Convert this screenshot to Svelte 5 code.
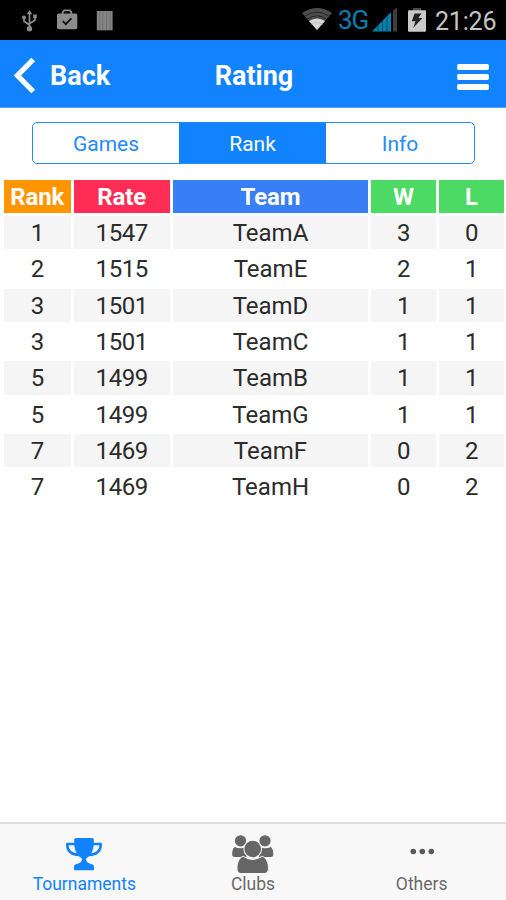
<script>
  const columns = [
    { label: 'Rank', color: '#ff9500' },
    { label: 'Rate', color: '#ff2d55' },
    { label: 'Team', color: '#387ef5' },
    { label: 'W', color: '#4cd964' },
    { label: 'L', color: '#4cd964' }
  ];
  const rows = [
    [1, 1547, 'TeamA', 3, 0],
    [2, 1515, 'TeamE', 2, 1],
    [3, 1501, 'TeamD', 1, 1],
    [3, 1501, 'TeamC', 1, 1],
    [5, 1499, 'TeamB', 1, 1],
    [5, 1499, 'TeamG', 1, 1],
    [7, 1469, 'TeamF', 0, 2],
    [7, 1469, 'TeamH', 0, 2]
  ];
  const segments = ['Games', 'Rank', 'Info'];
  let active = $state('Rank');
</script>

<div class="screen">
  <div class="status">
    <svg class="left" width="130" height="40" viewBox="0 0 130 40" aria-hidden="true">
      <g fill="none" stroke="#8c8c8c" stroke-width="1.7">
        <path d="M29.5 13V29M24 18v3.2l5.5 3.8M35 17v3.2l-5.5 3.2" />
      </g>
      <path d="M29.5 10l2.8 4.3h-5.6z" fill="#8c8c8c" />
      <circle cx="29.5" cy="28.8" r="2.7" fill="#8c8c8c" />
      <circle cx="24" cy="17.6" r="2" fill="#8c8c8c" />
      <rect x="33.2" y="14.5" width="3.6" height="3.6" fill="#8c8c8c" />
      <path d="M62.7 14v-2.2l1.6-1.5h5.4l1.6 1.5V14" fill="none" stroke="#8c8c8c" stroke-width="1.8" />
      <rect x="57" y="13.5" width="20.3" height="15.7" rx="1.8" fill="#8c8c8c" />
      <path d="M62.8 21.2l3 3 5.6-5.8" fill="none" stroke="#111" stroke-width="1.8" />
      <rect x="96.8" y="11" width="15.8" height="19.3" fill="#858585" />
      <path d="M99.6 11v19.3M102.7 11v19.3M106.5 11v19.3M110 11v19.3" stroke="#6b6b6b" stroke-width=".8" />
    </svg>
    <div class="right">
      <svg width="32" height="40" viewBox="0 0 32 40" aria-hidden="true">
        <path d="M1 13Q16 3 31 13L16 30Z" fill="#4c4c4c" />
        <path d="M8 21Q16 16 24 21L16 30Z" fill="#d8d8d8" />
        <path d="M3.6 16.3Q16 8 28.4 16.3M6.2 19.3Q16 12.3 25.8 19.3" fill="none" stroke="#202020" stroke-width=".9" />
        <path d="M10 24.2Q16 20.5 22 24.2" fill="none" stroke="#b0b0b0" stroke-width=".6" />
      </svg>
      <span class="net">3G</span>
      <svg class="signal" width="27" height="40" viewBox="0 0 27 40" aria-hidden="true">
        <path d="M0 31.5L19 12v19.5z" fill="#087fae" />
        <path d="M6 25v7M10.5 21v11M15 16v16" stroke="#03405a" stroke-width=".8" />
        <path d="M21 10.5l4-3v24h-4z" fill="#3d3d3d" />
      </svg>
      <svg class="battery" width="18" height="40" viewBox="0 0 18 40" aria-hidden="true">
        <path d="M5 8h8v3H5z" fill="#4a4a4a" />
        <rect x="0" y="10.2" width="18" height="21.5" rx="1" fill="#cacaca" />
        <path d="M6.5 13.5h7l-3.200 4.500h4.200L5.2 28l2.300-6.700H3.8z" fill="#222" />
      </svg>
      <span class="clock">21:26</span>
    </div>
  </div>

  <header>
    <button class="back">
      <svg width="22" height="37" viewBox="0 0 22 37" aria-hidden="true">
        <path d="M19.2 2.5L3.5 18.5 19.2 34.5" fill="none" stroke="#fff" stroke-width="5.3" />
      </svg>
      <span>Back</span>
    </button>
    <h1>Rating</h1>
    <button class="menu" aria-label="Menu"><i></i><i></i><i></i></button>
  </header>

  <main>
    <div class="segmented">
      {#each segments as s}
        <button class:on={active === s} onclick={() => (active = s)}>{s}</button>
      {/each}
    </div>

    <div class="table">
      {#each columns as c}
        <div class="head" style:background={c.color}>{c.label}</div>
      {/each}
      {#each rows as row, i}
        {#each row as cell}
          <div class="cell" class:num={typeof cell === 'number'} class:odd={i % 2 === 0}>{cell}</div>
        {/each}
      {/each}
    </div>
  </main>

  <nav>
    <div class="tab current">
      <svg width="44" height="42" viewBox="0 0 44 42" aria-hidden="true">
        <path d="M12.200 6.5Q12.200 5 14 5h16q1.800 0 1.800 1.500C32.300 17 29.500 22.500 24 25.500c0 3 1.200 4.500 4.500 5.200 2.200.4 3.500 1.300 3.500 3.300v2.300q0 1-1 1H13q-1 0-1-1V34c0-2 1.300-2.900 3.500-3.300 3.300-.7 4.500-2.200 4.500-5.200C14.500 22.500 11.700 17 12.200 6.500z" fill="#1283ff" />
        <path d="M13.500 11H5.300C5 18 9.500 21.600 17 22M30.500 11h8.200C39 18 34.500 21.600 27 22" fill="none" stroke="#1283ff" stroke-width="2.500" stroke-linejoin="round" />
      </svg>
      <span>Tournaments</span>
    </div>
    <div class="tab">
      <svg width="44" height="42" viewBox="0 0 44 42" aria-hidden="true">
        <g fill="#666">
          <circle cx="9.500" cy="7.800" r="5.600" />
          <circle cx="34" cy="7.800" r="5.600" />
          <path d="M3.500 14q6 2.500 12 0v10H4Q1.200 24 1.200 21.500 1.200 16 3.500 14zM40 14q-6 2.500-12 0v10h11.500q2.800 0 2.800-2.500 0-5.500-2.300-7.500z" />
          <circle cx="21.700" cy="16" r="9.300" fill="#f8f8f8" />
          <path d="M12.200 23.300Q21.700 29.500 31.200 23.300C35.500 24.500 37.500 30 37.500 35.500q0 5-4.500 5H10.500q-4.500 0-4.500-5c0-5.500 2-11 6.200-12.200z" stroke="#f8f8f8" />
          <circle cx="21.700" cy="16" r="8.300" />
        </g>
      </svg>
      <span>Clubs</span>
    </div>
    <div class="tab">
      <svg width="44" height="42" viewBox="0 0 44 42" aria-hidden="true">
        <g fill="#585858">
          <circle cx="13.300" cy="18.500" r="2.800" />
          <circle cx="22.300" cy="18.500" r="2.800" />
          <circle cx="31.300" cy="18.500" r="2.800" />
        </g>
      </svg>
      <span>Others</span>
    </div>
  </nav>
</div>

<style>
  .screen {
    width: 506px;
    height: 900px;
    display: flex;
    flex-direction: column;
    background: #fff;
    font-family: Roboto, 'Liberation Sans', sans-serif;
    overflow: hidden;
  }
  button {
    border: 0;
    margin: 0;
    padding: 0;
    background: none;
    font: inherit;
    color: inherit;
  }
  svg { display: block; flex: none; }
  .status {
    height: 40px;
    flex: none;
    background: #000;
    display: flex;
    justify-content: space-between;
  }
  .right { display: flex; padding-right: 9px; }
  .net { color: #087fae; font-size: 26px; letter-spacing: -1px; line-height: 41px; width: 31px; margin-left: 5px; }
  .signal { margin-left: 3px; }
  .battery { margin-left: 9px; }
  .clock { color: #c4c4c4; font-size: 25px; letter-spacing: -0.200px; line-height: 43px; margin-left: 9px; width: 62px; white-space: nowrap; }
  header {
    height: 68px;
    flex: none;
    box-sizing: border-box;
    border-bottom: 1px solid #5aa6fb;
    background: #1283ff;
    color: #fff;
    display: grid;
    grid-template-columns: 1fr auto 1fr;
    align-items: center;
    font-size: 27px;
    font-weight: 700;
  }
  .back { display: flex; align-items: center; gap: 14px; padding-left: 14px; padding-top: 4px; }
  h1 { margin: 0; padding: 4px 0 0 2px; font-size: 27px; line-height: 32px; }
  .menu { justify-self: end; display: flex; flex-direction: column; gap: 4px; padding: 7px 17px 0 0; }
  .menu i { width: 32px; height: 6px; border-radius: 2px; background: #fff; }
  main { flex: 1; }
  .segmented {
    height: 42px;
    box-sizing: border-box;
    margin: 14px 31px 0 32px;
    border: 1px solid #2489fb;
    border-radius: 5px;
    display: grid;
    grid-template-columns: 146px 147px 1fr;
    overflow: hidden;
    color: #2489fb;
    font-size: 21px;
    letter-spacing: -0.200px;
  }
  .segmented button { padding-top: 1px; }
  .segmented .on { background: #1283ff; color: #fff; }
  .table {
    margin: 15.500px 2.500px 0 4px;
    display: grid;
    grid-template-columns: 66.500px 96.500px 195px 65px 65px;
    grid-template-rows: 33.500px;
    grid-auto-rows: 33.350px;
    gap: 3px;
    text-align: center;
    font-size: 24px;
    line-height: 35px;
  }
  .head { color: #fff; font-weight: 700; line-height: 34px; letter-spacing: -0.100px; }
  .cell { color: #2b2b2b; }
  .num { letter-spacing: -0.400px; }
  .odd { background: #f5f5f5; }
  nav {
    height: 78px;
    flex: none;
    box-sizing: border-box;
    border-top: 2px solid #dedede;
    background: #f8f8f8;
    display: flex;
  }
  .tab {
    flex: 1;
    display: flex;
    flex-direction: column;
    align-items: center;
    color: #6a6a6a;
    font-size: 17.500px;
    padding-top: 9px;
  }
  .tab span { line-height: 18px; }
  .tab.current { color: #1283ff; }
</style>
